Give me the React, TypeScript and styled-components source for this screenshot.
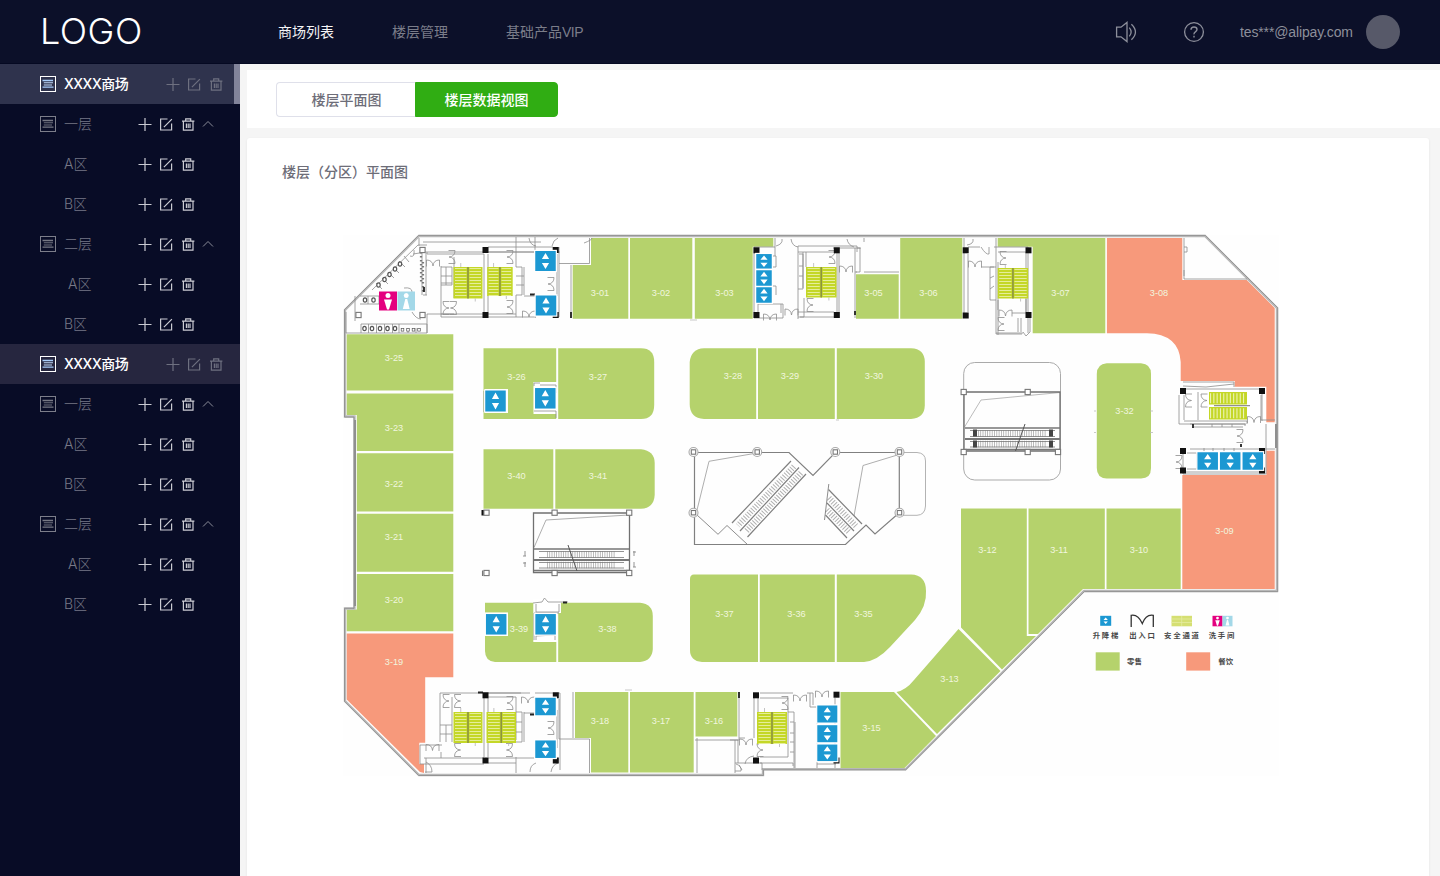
import React from 'react';
import styled, { createGlobalStyle, css } from 'styled-components';

const GlobalStyle = createGlobalStyle`
  * { box-sizing: border-box; }
  html, body { margin: 0; padding: 0; background: #f5f5f5; }
  body {
    font-family: 'Liberation Sans', 'Noto Sans CJK SC', sans-serif;
    font-size: 14px;
    overflow: hidden;
  }
`;

const Page = styled.div`
  display: flex;
  flex-direction: column;
  width: 1440px;
  height: 876px;
  overflow: hidden;
`;

const Header = styled.header`
  display: flex;
  align-items: center;
  flex: none;
  height: 64px;
  padding: 0 40px;
  background: #0c1029;
  border-bottom: 1px solid #050922;
`;

const Logo = styled.div`
  width: 238px;
  padding-bottom: 2px;
  font-family: Inter, 'Liberation Sans', sans-serif;
  font-size: 36px;
  font-weight: 300;
  line-height: 60px;
  letter-spacing: 0.5px;
  color: #fff;
`;

const Nav = styled.nav`
  display: flex;
  gap: 58px;
  flex: 1;
`;

const NavItem = styled.a<{ $active?: boolean }>`
  line-height: 20px;
  color: ${p => (p.$active ? '#f4f4f6' : '#7b7d89')};
`;

const Latin = styled.span`
  letter-spacing: -0.5px;
`;

const Tools = styled.div`
  display: flex;
  align-items: center;
  color: #8d8f9b;
`;

const ToolIcon = styled.svg`
  width: 22px;
  height: 22px;
  margin-right: 46px;
  fill: none;
  stroke: currentColor;
  stroke-width: 1.3;
`;

const Email = styled.span`
  width: 113px;
  margin: 0 13px 0 -11px;
  line-height: 20px;
  letter-spacing: -0.13px;
  white-space: nowrap;
`;

const Avatar = styled.div`
  width: 34px;
  height: 34px;
  border-radius: 50%;
  background: #575969;
`;

const Body = styled.div`
  display: flex;
  flex: 1;
  min-height: 0;
`;

const Sidebar = styled.aside`
  flex: none;
  width: 240px;
  background: #080c26;
`;

const rowBase = css`
  display: flex;
  align-items: center;
  height: 40px;
  padding-left: 40px;
`;

const MallRow = styled.div<{ $current?: boolean }>`
  ${rowBase}
  color: #fff;
  background: ${p => (p.$current ? '#2f334d' : '#26263f')};
  border-right: ${p => (p.$current ? '6px solid #82849a' : '0')};
`;

const TreeRow = styled.div`
  ${rowBase}
  color: #777987;
`;

const ListIcon = styled.svg`
  flex: none;
  width: 16px;
  height: 16px;
  margin-right: 8px;
`;

const MallName = styled.span`
  flex: none;
  width: 102px;
  padding-bottom: 2px;
  font-family: Inter, 'Noto Sans CJK SC', sans-serif;
  font-weight: 500;
  letter-spacing: -0.5px;
  white-space: nowrap;
`;

const NodeName = styled.span<{ $level: number; $nudge?: boolean }>`
  flex: none;
  width: ${p => (p.$level === 1 ? 74 : 98)}px;
  padding-bottom: 2px;
  padding-left: ${p => (p.$level === 1 ? 0 : p.$nudge ? 28 : 24)}px;
  font-family: Inter, 'Noto Sans CJK SC', sans-serif;
  font-weight: 300;
  white-space: nowrap;
`;

const ActionIcons = styled.svg<{ $dim?: boolean }>`
  flex: none;
  width: 78px;
  height: 16px;
  overflow: hidden;
  fill: none;
  stroke: ${p => (p.$dim ? '#6e7080' : '#cbccd3')};
  stroke-width: 1.2;
`;

const DimActions = styled.div`
  flex: none;
  width: 58px;
  overflow: hidden;
  line-height: 0;
`;

const Main = styled.main`
  display: flex;
  flex-direction: column;
  flex: 1;
  gap: 10px;
  padding: 6px 0 0 7px;
  background: #f5f5f5;
`;

const TabBar = styled.div`
  display: flex;
  align-items: center;
  flex: none;
  height: 58px;
  padding: 1px 29px 0;
  background: #fff;
`;

const Tab = styled.button<{ $active?: boolean }>`
  width: ${p => (p.$active ? 143 : 139)}px;
  height: 35px;
  padding: 0 0 2px ${p => (p.$active ? 0 : 1)}px;
  border: 1px solid ${p => (p.$active ? '#30ad13' : '#dfe0ea')};
  border-right-width: ${p => (p.$active ? 1 : 0)}px;
  border-radius: ${p => (p.$active ? '0 4px 4px 0' : '4px 0 0 4px')};
  background: ${p => (p.$active ? '#30ad13' : '#fff')};
  color: ${p => (p.$active ? '#fff' : '#6d6d78')};
  font: 500 14px/20px 'Noto Sans CJK SC', sans-serif;
`;

const Panel = styled.section`
  flex: 1;
  width: 1182px;
  padding: 23px 35px 0;
  border-radius: 3px 3px 0 0;
  background: #fff;
  box-shadow: 0 1px 3px rgba(0, 0, 0, 0.07);
`;

const PanelTitle = styled.h2`
  margin: 0;
  font: 500 14px/20px 'Noto Sans CJK SC', sans-serif;
  color: #6d6d78;
`;

const Plan = styled.svg`
  display: block;
  width: 955px;
  height: 565px;
  margin: 44px 0 0 53px;
`;

const ShopLabel = styled.text`
  font: 9.2px 'Liberation Sans', sans-serif;
  fill: #f1f6df;
  text-anchor: middle;
`;

const LegendLabel = styled.text`
  font: 700 7.4px 'Noto Sans CJK SC', sans-serif;
  fill: #484848;
`;

const RETAIL = '#b5d26c';
const FOOD = '#f7997b';

function Actions({ dim, open }: { dim?: boolean; open?: boolean }) {
  return (
    <ActionIcons $dim={dim} viewBox="0 0 78 16">
      <path d="M.5 8.5h13M7 2v13" />
      <path d="M29.5 3H22.6v11h11V7.4M25.9 11.1l8-8" />
      <path d="M44 5.2h12.4M47.7 5V2.9h5v2.1M45.4 5.4v8.8h9.6V5.4M48.4 7.4v4.6M50.2 7.4v4.6M52 7.4v4.6" />
      {open && <path d="M65 10.5l5-5 5 5" stroke="#8b8d99" strokeWidth="1" />}
    </ActionIcons>
  );
}

function ListBox({ bright }: { bright?: boolean }) {
  return (
    <ListIcon viewBox="0 0 16 16" fill="none" stroke={bright ? '#fff' : '#7c7e8a'}>
      <rect x=".5" y=".5" width="15" height="15" />
      <path d="M2.5 4.5h10.5M2.5 11.2h11" stroke={bright ? '#a9cdfb' : '#777985'} strokeWidth="1.3" />
      <path d="M3.8 6.7h9.2M3.8 9h8.2" stroke={bright ? '#c3dafa' : '#6e707d'} strokeWidth="1.1" />
    </ListIcon>
  );
}

function Mall({ current }: { current?: boolean }) {
  return (
    <>
      <MallRow $current={current}>
        <ListBox bright />
        <MallName>XXXX商场</MallName>
        <DimActions>
          <Actions dim />
        </DimActions>
      </MallRow>
      {['一层', '二层'].map((floor, i) => (
        <React.Fragment key={floor}>
          <TreeRow>
            <ListBox />
            <NodeName $level={1}>{floor}</NodeName>
            <Actions open />
          </TreeRow>
          {['A区', 'B区'].map(zone => (
            <TreeRow key={zone}>
              <NodeName $level={2} $nudge={i === 1 && zone === 'A区'}>{zone}</NodeName>
              <Actions />
            </TreeRow>
          ))}
        </React.Fragment>
      ))}
    </>
  );
}

type Shop = [id: string, x: number, y: number, d: string, food?: boolean];

const shops: Shop[] = [
  ['3-01', 600, 293, 'M591 238H628.3V318.7H572.7V265H591Z'],
  ['3-02', 661, 293, 'M630 238H692.3V318.7H630Z'],
  ['3-03', 724.5, 293, 'M694.8 238H773.3V246.7H752.7V318.7H694.8Z'],
  ['3-05', 873.5, 293, 'M856 274.3H898.7V318.7H856Z'],
  ['3-06', 928.5, 293, 'M900.2 238H962.3V318.7H900.2Z'],
  ['3-07', 1060.5, 293, 'M997.7 238H1105.3V333.3H1032.7V246.7H997.7Z'],
  ['3-08', 1159, 293, 'M1106.9 238H1182.3V280H1246.7L1274.7 308V422.3H1266.3V386.7H1234.7V381H1180.7V362Q1179 334 1147 333.3H1106.9Z', true],
  ['3-09', 1224.5, 531, 'M1266.3 450.7H1274.7V589H1182.3V475H1266.3Z', true],
  ['3-10', 1139, 550, 'M1106.5 508.5H1180.7V589H1106.5Z'],
  ['3-11', 1059, 550, 'M1028.5 508.5H1104.8V589H1083L1038 634H1028.5Z'],
  ['3-12', 987.5, 550, 'M961 508.5H1026.8V636H1036L1002 669.5L961 627.5Z'],
  ['3-13', 949.5, 679, 'M958.5 629L1000.5 671L937 734L896.5 692Q906 690 914 680Z'],
  ['3-15', 871.5, 728, 'M840.5 692H894L936 736L904.5 768H840.5Z'],
  ['3-16', 714, 721, 'M695.5 692H737.3V736.5H695.5Z'],
  ['3-17', 661, 721, 'M630 692H693.7V772.5H630Z'],
  ['3-18', 600, 721, 'M575 692H628.3V772.5H591V738H575Z'],
  ['3-19', 394, 662, 'M346.7 633.5H453.3V677.3H425.2V742.7H419.3V764H424V773L420 772L346.7 699.5Z', true],
  ['3-20', 394, 600, 'M356.8 574H453.3V631.3H346.7V609.5H356.8Z'],
  ['3-21', 394, 537, 'M356.8 513.7H453.3V571.8H356.8Z'],
  ['3-22', 394, 484, 'M356.8 453.3H453.3V511.5H356.8Z'],
  ['3-23', 394, 428, 'M346.7 393.5H453.3V451H356.8V415H346.7Z'],
  ['3-25', 394, 358, 'M346.7 334.3H453.3V390.5H346.7Z'],
  ['3-26', 516.5, 377, 'M483.5 348.3H556.2V419H483.5Z'],
  ['3-27', 598, 377, 'M558.2 348.3H641Q654.2 348.3 654.2 362V405Q654.2 419 641 419H558.2Z'],
  ['3-28', 733, 376, 'M756.2 348.3V419H704Q689.7 418 689.7 404V362Q691 349 704 348.3Z'],
  ['3-29', 790, 376, 'M758 348.3H834.8V419H758Z'],
  ['3-30', 874, 376, 'M836.8 348.3H911Q924.8 349 924.8 362V405Q924.8 418 911 419H836.8Z'],
  ['3-32', 1124.5, 411, 'M1106.7 363.3H1141Q1151 364 1151 374V468Q1151 478.5 1141 478.5H1106.7Q1096.8 478 1096.8 468V374Q1097 364 1106.7 363.3Z'],
  ['3-35', 863.5, 614, 'M836.8 574.5H911Q926 575 926 591Q927 606 915 620L890 647Q877 661 864 662H836.8Z'],
  ['3-36', 796.5, 614, 'M759.8 574.5H834.8V662H759.8Z'],
  ['3-37', 724.5, 614, 'M694 574.5H758V662H702Q690 661 690 650V579Q690 574.5 694 574.5Z'],
  ['3-38', 607.5, 629, 'M558.2 602.7H640Q652.8 604 652.8 616V649Q652 661 640 662H558.2Z'],
  ['3-39', 519, 629, 'M485 602.7H556.3V662H495Q485 661 485 651Z'],
  ['3-40', 516.5, 476, 'M483.5 449.2H553.3V508.8H483.5Z'],
  ['3-41', 598, 476, 'M555.3 449.2H641Q654.7 451 654.7 463V495Q654 508 641 508.8H555.3Z'],
];

/* centre x, centre y, width, height */
const lifts = [
  [545.5, 261, 20.5, 20], [546, 305.5, 20.5, 20],
  [764, 261.3, 15.5, 14.5], [764, 278, 15.5, 15.5], [764, 295, 15.5, 15.5],
  [495.5, 401, 20.5, 21], [545.3, 398.3, 20.5, 20.5],
  [496.2, 624.3, 20.5, 20.5], [545.6, 624.3, 20.5, 20.5],
  [545.5, 706.5, 20.5, 17.5], [545.5, 749.2, 20.5, 17.5],
  [827.3, 714, 20, 17], [827.3, 733.7, 20, 17], [827.3, 752.8, 20, 16.5],
  [1207.7, 461, 20.5, 17.5], [1230.2, 461, 20.5, 17.5], [1252.8, 461, 20.5, 17.5],
  [1105.7, 620.8, 11, 10],
];

const columns = [
  [485.5, 250], [555.7, 250], [485.5, 315], [555.7, 315],
  [756.5, 250.3], [836.8, 250.3], [756.5, 315], [836.8, 315],
  [965.7, 250.3], [1028.5, 250.3], [965.7, 315.5], [1028.5, 315],
  [1183, 391], [1262, 391], [1183, 451], [1262, 451], [1183, 470.5], [1262, 470.5],
  [485.5, 695.3], [555.8, 695.3], [485.5, 760.5], [555.8, 760.5],
  [756, 695.3], [836.5, 694.7], [756, 760.5], [836.5, 760.5],
];

/* x, y, width, height of each flight */
const stairs = [
  [453.5, 267, 29, 31.5], [487.2, 267, 25.5, 29],
  [806, 267, 30.5, 30.5], [997.7, 268, 30.5, 30.5],
  [453.5, 712, 29, 31], [486.5, 712, 29.5, 31], [757, 712, 30, 32],
];

const openColumns = [
  [486.5, 512.7], [554.6, 512.7], [629.2, 512.7], [486.5, 573], [554.6, 573], [629.2, 573],
  [963.7, 392], [1027.7, 392], [963.7, 452], [1027.7, 452], [1058, 452],
  [422.5, 250], [358.5, 315], [422.5, 315],
];

const ringColumns = [[693.5, 452], [757.2, 452], [835.3, 452], [899.5, 452], [693.5, 512.7], [899.5, 512.7]];

/* x, y, rotation of double doors */
const doors = [
  [433, 261, 0], [454, 257, 90], [455.5, 308, 90], [444, 308, -90], [512, 257, 90], [512, 307, 90],
  [529, 312, 0], [553, 284, 90], [770, 315, 0], [791.5, 310, 0], [808, 305, -90],
  [834, 257, 90], [846, 267, 0], [975, 262, 0], [1001, 258, -90], [1005.5, 311, 0], [999, 324, -90],
  [1186.5, 400.5, -90], [1202, 400.5, -90], [1254, 417.5, 0], [1242, 436, 90], [1181, 462, 90],
  [444, 701, -90], [455.5, 701, -90], [528, 698, 0], [512, 703, 90], [553, 728, 90],
  [432.5, 745.5, 0], [455.5, 750, -90], [511.5, 750, 90],
  [787, 703, 90], [800, 696, 0], [822, 692, 0], [746, 740, 0], [758, 750, -90],
];

const walls = [
  // north-west core and washrooms
  'M372 290L418 245H427M422 248V295M426 253V295M423 242H541M419 238V246M413 254L426 252H560M427 252V254H484M427 314V333H346V312M355 296V321M427 314H454M441 266V317M454 257V298M441 283H452M441 317H484M441 314H484M484 254V312M488 254V312M488 247H553M488 252H536M488 317H536M488 314H516M516 237V267M516 295V317M516 267H522V295H516M524 267V295M516 276H524M516 285H524M524 296H536M557 254V296M559 247V317M535 237V250M559 263.5H589.5V238M571 265V318',
  'M441 267H452V285H441M446 267V285M441 276H452M360 296H379V304H360M368 296V304',
  'M361 324H427V333M361 324V333M368.5 324V333M376.5 324V333M384.5 324V333M392.5 324V333M399 324V333M408 328V333M416 328V333M423 295H427',
  'M376 283l6 6M382 278l6 6M388 272l6 6M393 267l6 6M399 261l6 6M404 256l5 6',
  // north core
  'M775 238V256M775 247H754V318H783V304H758V312M781 304V313M798 246V319M798 246H857V252M798 252H837V317H798M803 252V289H798M806 252V267M804 298V317H800M799 254H803V288M799 266H803M799 276H803M839 253V318M833 248H860V272H856M855 248V272H857M857 248H861M864 272H899M798 312H834M855 272V318M773 256H776V267H773M773 286H776V295M864 238V242',
  // north-east core
  'M964 238V318M968 254V312M996 238V334H1022M968 247H980M994 247H1028V333M998 252H1026M998 262V335M1026 252V312M981 267H996M994 267H990V300H996M990 278L994 276M990 289L994 286M1012 313H1028M1018 318V332M1021 318V332M996 333H1023M1023 332L1026 336L1030 332M1030 318V332M1026 299V312M998 300V310',
  'M1184 238V279H1247M1184 247H1187V252H1184M1184 270V276',
  // east core
  'M1183 382H1234V387M1183 386L1206 387L1234 384M1186 389H1262V421M1179 395V424H1246M1184 420V395M1198 392V420M1184 421H1247V424M1190 424H1245V426M1192 427H1243M1212 424V427M1222 424V427M1232 424V427M1261 395V420H1275M1266 424V449M1190 449H1275M1187 453H1197V469H1187M1183 448V474H1266V449M1204 448V453M1213 448V453M1224 448V453M1234 448V453M1183 472H1262',
  // south-west core
  'M440 693H530M440 693V742M452 697V742M440 725H452M440 734H452M446 725V742M484 698V757M488 698V757M488 693H521M535 693H560V770M488 697H516V740M516 712H522V742H516M516 722H522M516 732H522M524 712V742M524 713H536M420 745H442M420 745V764H484M424 758H484M426 758V773M441 752V758M516 757V773M488 758H536M488 763H516M557 710V748M559 739H589.5V773M559 699V739M573 692V738',
  // south core
  'M739 692V740H695M697 738V773M735 740V763M738 740V763M735 763H762M739 738H745M754 694V738M758 697V745M760 698H788V757H760M760 693H793M788 712H794V768M790 722H794M790 733H794M790 742H794M790 752H794M795 722V768M760 763H793V766M807 693H810V707H835M810 693H813V705M817 706V768M835 698V768M817 764H836M735 763V773M739 765L742 770M762 763V770M730 740H738',
];

function Door({ x, y, r }: { x: number; y: number; r: number }) {
  return <path d="M-6.5 5.5V-1Q-.5 -1 0 5Q.5 -1 6.5 -1V5.5" transform={`translate(${x} ${y}) rotate(${r})`} />;
}

function Lift({ x, y, w, h }: { x: number; y: number; w: number; h: number }) {
  const k = h / 20;
  return (
    <g transform={`translate(${x} ${y})`}>
      <rect x={-w / 2 - 1.2} y={-h / 2 - 1.2} width={w + 2.4} height={h + 2.4} fill="#fff" />
      <rect x={-w / 2} y={-h / 2} width={w} height={h} fill="#1c98d2" />
      <path d={`M0 ${-8 * k}L${3.6} ${-2 * k}H-3.6ZM0 ${8 * k}L${3.6} ${2 * k}H-3.6Z`} fill="#fff" transform={w < 12 ? 'scale(.6 .8)' : undefined} />
    </g>
  );
}

function Stair({ x, y, w, h }: { x: number; y: number; w: number; h: number }) {
  const mid = x + w / 2;
  return (
    <g>
      <rect x={x} y={y} width={w} height={h} fill="#c4d727" />
      <path d={`M${x + w / 4} ${y + 1}V${y + h}M${x + (w * 3) / 4} ${y + 1}V${y + h}`} stroke="#e6ee9b" strokeWidth={w / 2 - 3} strokeDasharray=".9 2.1" />
      <path d={`M${mid} ${y}V${y + h}`} stroke="#8c9440" strokeWidth="1.6" />
      <path d={`M${x + w / 4} ${y - 4}v4M${x + (w * 3) / 4} ${y + h}v3`} stroke="#aaa" strokeWidth=".7" />
    </g>
  );
}

function Person({ x, y, w, h, fill, flared }: { x: number; y: number; w: number; h: number; fill: string; flared?: boolean }) {
  return (
    <g transform={`translate(${x} ${y}) scale(${w / 18} ${h / 19})`}>
      <rect width="18" height="19" fill={fill} />
      <circle cx="9" cy="4" r="2.5" fill="#fff" />
      <path d={flared ? 'M8 7.5H10L12.5 17.5H5.5Z' : 'M5 8H13L10 18H8Z'} fill="#fff" />
    </g>
  );
}

function FlatEscalator({ x, y, w }: { x: number; y: number; w: number }) {
  return (
    <g fill="none" stroke="#777">
      <path d={`M${x} ${y}H${x + w}M${x} ${y + 21.5}H${x + w}`} strokeWidth="1.3" />
      <path d={`M${x} ${y + 11}H${x + w}`} strokeWidth="2" />
      <path d={`M${x + 13} ${y + 5.5}H${x + w - 13}M${x + 13} ${y + 16}H${x + w - 13}`} stroke="#aaa" strokeWidth="6.5" strokeDasharray=".8 1.5" />
      <path d={`M${x + 5} ${y + 2.5}H${x + w - 5}M${x + 5} ${y + 8.5}H${x + w - 5}M${x + 5} ${y + 13.5}H${x + w - 5}M${x + 5} ${y + 19}H${x + w - 5}`} strokeWidth=".8" />
    </g>
  );
}

function FloorPlan() {
  return (
    <Plan viewBox="335 225 955 565">
      <rect x="343" y="235" width="936" height="541" fill="#fefefe" />
      {shops.map(([id, , , d, food]) => (
        <path key={id} d={d} fill={food ? FOOD : RETAIL} />
      ))}

      <g fill="none" strokeLinejoin="miter">
        <path d="M419 236H1205L1277 308V591H1084L905.5 769.3H763V775H419L345 701V608.5H354.5V416.5H345V310Z" stroke="#b8b8b8" strokeWidth="2.4" />
        <path d="M418.5 235.4H1205.3L1277.7 307.7V591.6H1084.3L905.7 769.8H763.4V775.5H418.7L344.5 701.3V608.3H354V417H344.5V309.7Z" stroke="#8a8a8a" strokeWidth=".8" />
        <path d="M1276 424V448M355 420V606" stroke="#8f8f8f" strokeWidth="2" />
      </g>

      <g fill="#fff">
        <path d="M533.5 382H557V414H533.5ZM533.3 599H561V613H557V642H533.3ZM1181 388H1266V424H1181Z" />
        <path d="M485 389H508V413H485ZM485 612.5H508V636H485Z" />
      </g>

      <g fill="none" stroke="#8d8d8d" strokeWidth=".8">
        {walls.map(d => <path key={d} d={d} />)}
        {doors.map(([x, y, r]) => <Door key={`${x}-${y}`} x={x} y={y} r={r} />)}
        <path d="M584 243Q592 240 592 238M529 238Q530 245 536 246M552 246Q553 240 558 238M776 246Q783 244 782 239M791 239Q792 246 798 247M847 239Q848 245 854 247M967 245Q974 244 973 239M981 247Q986 255 989 254V247M410 256Q415 258 414 250M404 288Q412 287 412 292M412 312Q416 319 421 319M426 762Q432 765 432 772H425M530 772Q530 765 536 763M551 772Q552 765 558 763M736 764Q742 766 741 771H735M745 764Q746 757 754 756" />
        <path d="M534 386V383H540M540 385H556V393M484 391V412M534 411H556V418M533 603L542 602L544.5 598L548 602H568M536 604V612H559V604M559 613H534V640M536 640V636L555 635V640" />
        <path d="M1150 411h3M1094 411h2M1150 432.5h3M1094 432.5h2M836 420h3M690 320h7M625 690h7" stroke="#bbb" />
      </g>
      <path d="M421 252V283M423 262V293" stroke="#777" strokeWidth="2.2" strokeDasharray="1.5 2.5" fill="none" />
      <path d="M424 287V292M530 294.5H535M483 692.5H478M530 714.5H536M563 602.5H567M1193 424V428M1241 444V447M571 312V318M739 692V698M855 311V315" stroke="#222" strokeWidth="1.8" />
      <g fill="#fff" stroke="#555" strokeWidth="1.2">
        {[[365, 300], [373.5, 300], [364.5, 328.5], [372, 328.5], [380, 328.5], [387.5, 328.5], [395, 328.5], [378.5, 285], [384.5, 279.5], [389.5, 274.5], [395, 269], [400, 264]].map(([x, y]) => (
          <ellipse key={`${x}-${y}`} cx={x} cy={y} rx="1.7" ry="2.2" />
        ))}
        {[402.5, 408, 413.5, 419].map(x => <rect key={x} x={x - 1.3} y="328.5" width="2.6" height="2.6" strokeWidth=".7" />)}
      </g>

      {/* landscape flights of the east core */}
      {[392, 407].map(y => (
        <g key={y}>
          <rect x="1209" y={y} width="38" height="12.5" fill="#c4d727" />
          <path d={`M1210 ${y + 6.3}H1246`} stroke="#edf3b6" strokeWidth="10" strokeDasharray="1.1 2.2" />
        </g>
      ))}
      <path d="M1214 405.7H1250" stroke="#777" strokeWidth="1" />
      {stairs.map(([x, y, w, h]) => <Stair key={`${x}-${y}`} x={x} y={y} w={w} h={h} />)}

      {columns.map(([x, y]) => <rect key={`${x}-${y}`} x={x - 3} y={y - 3} width="6" height="6" fill="#111" />)}
      {lifts.map(([x, y, w, h]) => <Lift key={`${x}-${y}`} x={x} y={y} w={w} h={h} />)}
      <Person x={379} y={291.5} w={18} h={19} fill="#e4007f" />
      <Person x={397.5} y={291.5} w={17.5} h={19} fill="#a3d8e8" flared />

      {/* east void with escalators */}
      <g fill="none" stroke="#aaa">
        <rect x="963.7" y="362.5" width="96.8" height="117.5" rx="11" />
        <path d="M964.5 427L981 400L1060 392.5" strokeWidth=".8" />
        <path d="M964 392H1060V451H964Z" stroke="#707070" strokeWidth="1.3" />
      </g>
      <FlatEscalator x={965} y={428} w={95} />
      <path d="M973 433h4M973 444h4M1049 433h4M1049 444h4" stroke="#444" strokeWidth="7" />
      <path d="M1015.5 451L1025 424" stroke="#555" strokeWidth="1" />

      {/* west void with escalators */}
      <g fill="none" stroke="#999">
        <path d="M534 547.5L546 520L629 515" strokeWidth=".8" />
        <path d="M533.5 513H629.5V572.5H533.5Z" stroke="#707070" strokeWidth="1.3" />
      </g>
      <FlatEscalator x={534} y={549} w={95} />
      <path d="M568 545L577 571" stroke="#555" strokeWidth="1" />
      <path d="M525 551v5m-2 0h3M525 562v5m-2-4h3M634 551v5m-1-4h3M634 562v5m-1 0h3" stroke="#888" strokeWidth=".9" />

      {/* central atrium */}
      <g fill="none" stroke="#808080" strokeWidth="1.2">
        <path d="M694.5 452.5H789L813 475.5L835.3 452.5H899.3V512.7L875 534L866 525L845.5 544.5H694.5Z" />
        <path d="M694.5 512.7L718 534.3L727 525.5L747.5 544.5" strokeWidth=".9" />
        <path d="M697 510L709 461.3L757 453M854 516L863 465.5L899 454.5" stroke="#999" strokeWidth=".8" />
        <path d="M900 452.5H917Q925.5 453 925.5 461V506Q925 515 917 515.3H900" stroke="#aaa" strokeWidth=".9" />
        <path d="M791 461L732 523M799 467.5L740 531M806 474L747.5 537M828.5 489.5L862 524M827 503L854 531M825.5 515L847 538" />
        <path d="M794 466.5L738 525.5M801 473L745.5 532M829 498L856 526M827 510L849 532" stroke="#b0b0b0" strokeWidth="6" strokeDasharray="1 1.7" />
        <path d="M828.8 484L824.5 520" strokeWidth=".9" />
      </g>

      <g fill="#fff" stroke="#777" strokeWidth="1.1">
        {openColumns.map(([x, y]) => <rect key={`${x}-${y}`} x={x - 2.6} y={y - 2.6} width="5.2" height="5.2" />)}
        {ringColumns.map(([x, y]) => (
          <g key={`${x}-${y}`}>
            <circle cx={x} cy={y} r="4.5" stroke="#aaa" />
            <rect x={x - 2.2} y={y - 2.2} width="4.4" height="4.4" />
          </g>
        ))}
        <path d="M482.5 510V515.5" stroke="#111" strokeWidth="2" />
        <path d="M482.5 570.5V576" />
      </g>

      {shops.map(([id, x, y]) => <ShopLabel key={id} x={x} y={y + 3.4}>{id}</ShopLabel>)}

      {/* legend */}
      <path d="M1131.2 627V615.3Q1138 614 1142.3 623.5Q1146 614 1153.3 615.3V627" fill="none" stroke="#333" strokeWidth="1.3" />
      <rect x="1171.5" y="615.8" width="20.5" height="10.5" fill="#d5df72" />
      <path d="M1171.5 619h20.5M1171.5 622.5h20.5M1181.7 616v10" stroke="#e5eb9f" strokeWidth=".8" />
      <Person x={1212.5} y={615.8} w={10} h={10.5} fill="#e4007f" />
      <Person x={1222.5} y={615.8} w={10} h={10.5} fill="#a3d8e8" flared />
      <LegendLabel x="1092.8" y="638" textLength="25.5">升降梯</LegendLabel>
      <LegendLabel x="1129.3" y="638" textLength="25.5">出入口</LegendLabel>
      <LegendLabel x="1164" y="638" textLength="35">安全通道</LegendLabel>
      <LegendLabel x="1208.8" y="638" textLength="25.5">洗手间</LegendLabel>
      <rect x="1095.7" y="652.3" width="24" height="18.3" fill={RETAIL} />
      <rect x="1186.2" y="652.3" width="24" height="18.3" fill={FOOD} />
      <LegendLabel x="1127" y="664.3">零售</LegendLabel>
      <LegendLabel x="1218.3" y="664.3">餐饮</LegendLabel>
    </Plan>
  );
}

export default function App() {
  return (
    <Page>
      <GlobalStyle />
      <Header>
        <Logo>LOGO</Logo>
        <Nav>
          <NavItem $active>商场列表</NavItem>
          <NavItem>楼层管理</NavItem>
          <NavItem>基础产品<Latin>VIP</Latin></NavItem>
        </Nav>
        <Tools>
          <ToolIcon viewBox="0 0 22 22">
            <path d="M1.6 6.2H6L12 1.4V20.6L6 15.8H1.6ZM14.3 6.6Q18 11 14.3 15.4M16.4 3.2Q24.5 11 16.4 18.8" />
          </ToolIcon>
          <ToolIcon viewBox="0 0 22 22">
            <circle cx="11" cy="11" r="9.4" />
            <path d="M8 8.8Q8 6 11 6T14 8.6Q14 9.8 12.4 10.8T11 13.4M11 14.8V16.6" strokeWidth="1.4" />
          </ToolIcon>
          <Email>tes***@alipay.com</Email>
          <Avatar />
        </Tools>
      </Header>
      <Body>
        <Sidebar>
          <Mall current />
          <Mall />
        </Sidebar>
        <Main>
          <TabBar>
            <Tab>楼层平面图</Tab>
            <Tab $active>楼层数据视图</Tab>
          </TabBar>
          <Panel>
            <PanelTitle>楼层（分区）平面图</PanelTitle>
            <FloorPlan />
          </Panel>
        </Main>
      </Body>
    </Page>
  );
}
